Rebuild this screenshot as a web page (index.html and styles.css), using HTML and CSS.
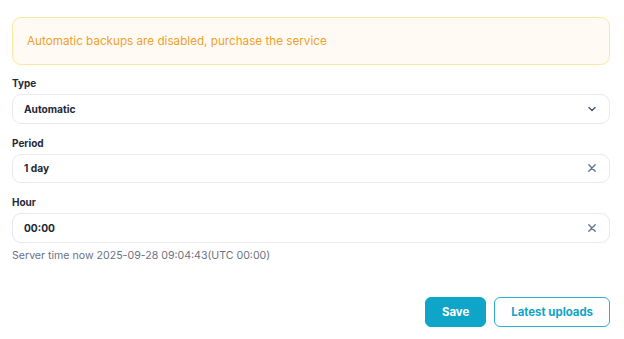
FILE: index.html
```html
<!DOCTYPE html>
<html lang="en">
<head>
<meta charset="utf-8">
<title>Backups</title>
<link rel="stylesheet" href="styles.css">
</head>
<body>
<div class="page">
    <div class="alert">Automatic backups are disabled, purchase the service</div>

    <div class="field">
        <label class="field-label">Type</label>
        <div class="control">
            <span class="control-value">Automatic</span>
            <!-- chevron -->
            <svg class="control-icon" width="10" height="10" viewBox="0 0 10 10" fill="none" stroke="#475569" stroke-width="1.4" stroke-linecap="round" stroke-linejoin="round">
                <path d="M2 3.5 L5 6.5 L8 3.5"/>
            </svg>
        </div>
    </div>

    <div class="field">
        <label class="field-label">Period</label>
        <div class="control">
            <span class="control-value">1 day</span>
            <svg class="control-icon" width="10" height="10" viewBox="0 0 10 10" fill="none" stroke="#64748b" stroke-width="1.4" stroke-linecap="round">
                <path d="M1.8 1.8 L8.2 8.2 M8.2 1.8 L1.8 8.2"/>
            </svg>
        </div>
    </div>

    <div class="field">
        <label class="field-label">Hour</label>
        <div class="control">
            <span class="control-value">00:00</span>
            <svg class="control-icon" width="10" height="10" viewBox="0 0 10 10" fill="none" stroke="#64748b" stroke-width="1.4" stroke-linecap="round">
                <path d="M1.8 1.8 L8.2 8.2 M8.2 1.8 L1.8 8.2"/>
            </svg>
        </div>
        <div class="hint">Server time now 2025-09-28 09:04:43(UTC 00:00)</div>
    </div>

    <div class="actions">
        <button class="btn btn-primary">Save</button>
        <button class="btn btn-outline">Latest uploads</button>
    </div>
</div>
</body>
</html>
```

FILE: styles.css
```css
body {
    margin: 0;
    padding: 0;
    background: #ffffff;
    font-family: Inter, "Noto Sans", sans-serif;
    color: #1f2937;
}
.page {
    padding: 17px 14px 0 12px;
}
.alert {
    height: 46px;
    display: flex;
    align-items: center;
    padding: 0 14px;
    border: 1px solid #fde7a0;
    border-radius: 9px;
    background: #fffbf4;
    color: #f0a02c;
    font-size: 11.7px;
}
.field {
    margin-top: 12px;
}
.alert + .field {
    margin-top: 11px;
}
.field-label {
    display: block;
    font-size: 10px;
    font-weight: 700;
    line-height: 15px;
    margin-bottom: 3px;
    color: #1f2937;
}
.control {
    height: 27.5px;
    display: flex;
    align-items: center;
    justify-content: space-between;
    padding: 0 12px 0 11px;
    border: 1px solid #e5e9f0;
    border-radius: 9px;
    background: #ffffff;
}
.control-value {
    font-size: 10.2px;
    font-weight: 700;
    color: #1f2937;
}
.control-icon {
    display: block;
}
.hint {
    margin-top: 5px;
    font-size: 10.6px;
    line-height: 16px;
    color: #6b7280;
}
.actions {
    display: flex;
    justify-content: flex-end;
    gap: 8px;
    margin-top: 33px;
}
.btn {
    height: 30px;
    padding: 0 16px;
    border-radius: 6px;
    font-family: Inter, "Noto Sans", sans-serif;
    font-size: 11.4px;
    font-weight: 700;
    cursor: pointer;
}
.btn-primary {
    background: #0ea5c8;
    border: 1px solid #0ea5c8;
    color: #ffffff;
}
.btn-outline {
    background: #ffffff;
    border: 1px solid #2bb0d2;
    color: #0ea5c8;
}
```
